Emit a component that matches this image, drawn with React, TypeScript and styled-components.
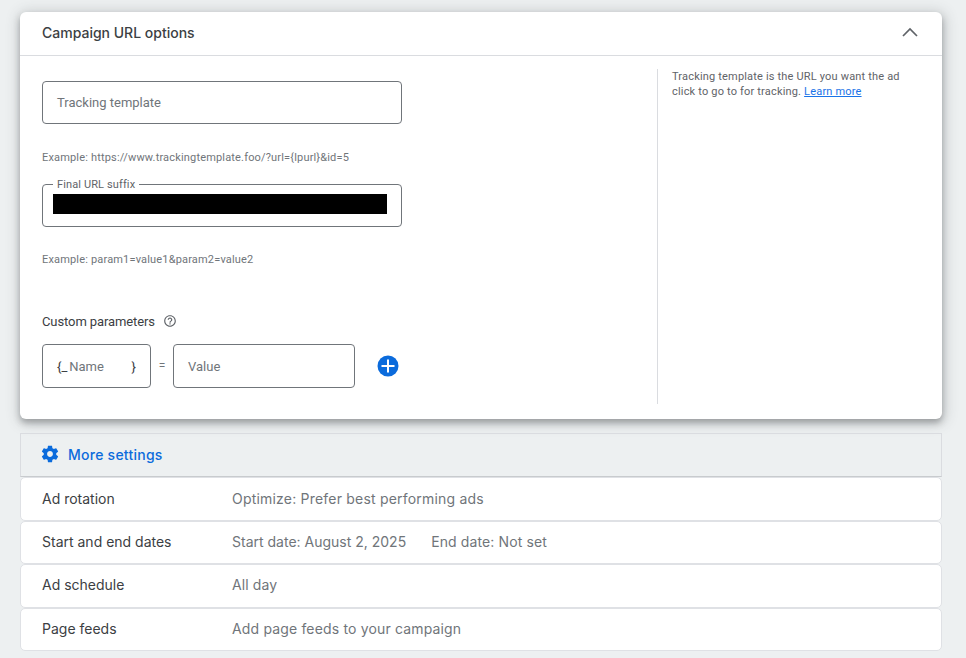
import React from "react";
import styled, { createGlobalStyle } from "styled-components";

const GlobalStyle = createGlobalStyle`
  html, body {
    margin: 0;
    padding: 0;
    background-color: #edf0f1;
    font-family: Roboto, "Liberation Sans", sans-serif;
  }
`;

const Page = styled.div`
  width: 966px;
  height: 658px;
  box-sizing: border-box;
  padding: 12px 24px 0 20px;
  overflow: hidden;
`;

const Card = styled.section`
  height: 407px;
  box-sizing: border-box;
  background-color: #fff;
  border-radius: 6px;
  box-shadow: 0 4px 6px rgba(60, 64, 67, 0.35), 1px 2px 14px 2px rgba(60, 64, 67, 0.22);
  margin-bottom: 14px;
`;

const CardHeader = styled.header`
  height: 44px;
  box-sizing: border-box;
  padding: 0 24px 3px 22px;
  display: flex;
  align-items: center;
  justify-content: space-between;
  border-bottom: 1px solid #dadce0;
`;

const CardTitle = styled.h2`
  margin: 0;
  font-family: Inter, Roboto, sans-serif;
  font-size: 14px;
  font-weight: 500;
  color: #3c4043;
`;

const Collapse = styled.svg`
  width: 24px;
  height: 24px;
  margin-right: -4px;
  display: block;
`;

const CardBody = styled.div`
  display: flex;
  height: 363px;
`;

const FormArea = styled.div`
  width: 637px;
  box-sizing: border-box;
  padding: 25px 0 0 22px;
`;

const HelpArea = styled.aside`
  margin-top: 13px;
  height: 335px;
  border-left: 1px solid #dadce0;
  padding: 0 30px 0 14px;
  flex: 1;
  font-size: 11px;
  line-height: 15px;
  letter-spacing: 0.18px;
  color: #5f6368;
`;

const HelpLink = styled.a`
  color: #1a73e8;
  text-decoration: underline;
`;

const Field = styled.div<{ $width: number; $height?: number }>`
  position: relative;
  width: ${({ $width }) => $width}px;
  height: ${({ $height }) => $height ?? 43}px;
  box-sizing: border-box;
  border: 1px solid #70757a;
  border-radius: 4px;
  padding: 0 14px;
  display: flex;
  align-items: center;
  font-size: 13px;
  color: #70757a;
`;

const FloatLabel = styled.span`
  position: absolute;
  top: -7px;
  left: 10px;
  padding: 0 4px;
  background-color: #fff;
  font-size: 11px;
  line-height: 13px;
  letter-spacing: 0.12px;
  color: #5f6368;
`;

const Redacted = styled.div`
  position: absolute;
  left: 10px;
  top: 9px;
  width: 334px;
  height: 20px;
  background-color: #000;
`;

const Hint = styled.p<{ $top: number; $bottom: number }>`
  margin: ${({ $top }) => $top}px 0 ${({ $bottom }) => $bottom}px;
  font-size: 11px;
  line-height: 14px;
  letter-spacing: 0.17px;
  color: #70757a;
`;

const ParamsLabel = styled.div`
  display: flex;
  align-items: center;
  gap: 8px;
  height: 16px;
  margin-bottom: 15px;
  font-size: 13px;
  letter-spacing: -0.1px;
  color: #3c4043;
`;

const ParamsRow = styled.div`
  display: flex;
  align-items: center;
`;

const Brace = styled.span`
  color: #3c4043;
`;

const NameText = styled.span`
  flex: 1;
  margin-left: 2px;
`;

const Equals = styled.span`
  width: 22px;
  text-align: center;
  font-size: 12px;
  color: #70757a;
`;

const AddButton = styled.svg`
  width: 22px;
  height: 22px;
  margin-left: 22px;
  display: block;
`;

const MoreSettings = styled.div`
  height: 44px;
  box-sizing: border-box;
  border: 1px solid #dadce0;
  border-bottom-color: #c8cbce;
  padding: 0 0 2px 19px;
  display: flex;
  align-items: center;
  gap: 8px;
  font-family: Inter, Roboto, sans-serif;
  font-size: 14px;
  font-weight: 450;
  letter-spacing: 0.25px;
  color: #0b6bdc;
`;

const SettingsList = styled.div`
  display: flex;
  flex-direction: column;
`;

const SettingRow = styled.div<{ $height: number; $lift: number }>`
  height: ${({ $height }) => $height}px;
  box-sizing: border-box;
  background-color: #fff;
  border: 1px solid #dfe1e5;
  border-radius: 5px;
  padding: 0 0 ${({ $lift }) => $lift}px 21px;
  display: flex;
  align-items: center;
  font-family: Inter, Roboto, sans-serif;
  font-size: 14px;
`;

const SettingName = styled.span`
  width: 190px;
  color: #3c4043;
`;

const SettingValue = styled.span<{ $spacing: number }>`
  color: #70757a;
  letter-spacing: ${({ $spacing }) => $spacing}px;
`;

const SettingExtra = styled.span`
  margin-left: 25px;
  letter-spacing: 0.12px;
`;

const rows = [
  { name: "Ad rotation", height: 44, lift: 2, spacing: 0.2, value: "Optimize: Prefer best performing ads" },
  { name: "Start and end dates", height: 43, lift: 2, spacing: 0, value: "Start date: August 2, 2025", extra: "End date: Not set" },
  { name: "Ad schedule", height: 44, lift: 4, spacing: 0.1, value: "All day" },
  { name: "Page feeds", height: 43, lift: 2, spacing: 0.16, value: "Add page feeds to your campaign" },
];

export default function App() {
  return (
    <Page>
      <GlobalStyle />
      <Card>
        <CardHeader>
          <CardTitle>Campaign URL options</CardTitle>
          <Collapse viewBox="0 0 24 24" fill="none" stroke="#5f6368" strokeWidth="1.7">
            <path d="M5 16l7-7 7 7" />
          </Collapse>
        </CardHeader>
        <CardBody>
          <FormArea>
            <Field $width={360}>Tracking template</Field>
            <Hint $top={27} $bottom={19}>Example: https://www.trackingtemplate.foo/?url={"{lpurl}"}&amp;id=5</Hint>
            <Field $width={360}>
              <FloatLabel>Final URL suffix</FloatLabel>
              <Redacted />
            </Field>
            <Hint $top={26} $bottom={46}>Example: param1=value1&amp;param2=value2</Hint>
            <ParamsLabel>
              Custom parameters
              <svg width="14" height="14" viewBox="0 0 24 24" fill="#5f6368">
                <path d="M11 18h2v-2h-2v2zm1-16C6.48 2 2 6.48 2 12s4.48 10 10 10 10-4.48 10-10S17.52 2 12 2zm0 18c-4.41 0-8-3.59-8-8s3.59-8 8-8 8 3.59 8 8-3.59 8-8 8zm0-14c-2.21 0-4 1.79-4 4h2c0-1.1.9-2 2-2s2 .9 2 2c0 2-3 1.75-3 5h2c0-2.25 3-2.5 3-5 0-2.21-1.79-4-4-4z" />
              </svg>
            </ParamsLabel>
            <ParamsRow>
              <Field $width={109} $height={44}>
                <Brace>{"{_"}</Brace>
                <NameText>Name</NameText>
                <Brace>{"}"}</Brace>
              </Field>
              <Equals>=</Equals>
              <Field $width={182} $height={44}>Value</Field>
              <AddButton viewBox="0 0 22 22">
                <circle cx="11" cy="11" r="10.5" fill="#0b6bdc" />
                <path d="M11 4.5v13M4.5 11h13" stroke="#fff" strokeWidth="2" />
              </AddButton>
            </ParamsRow>
          </FormArea>
          <HelpArea>
            Tracking template is the URL you want the ad click to go to for tracking.{" "}
            <HelpLink href="#">Learn more</HelpLink>
          </HelpArea>
        </CardBody>
      </Card>
      <MoreSettings>
        <svg width="20" height="20" viewBox="0 0 24 24" fill="#0b6bdc">
          <path d="M19.43 12.98c.04-.32.07-.64.07-.98s-.03-.66-.07-.98l2.11-1.65c.19-.15.24-.42.12-.64l-2-3.46c-.12-.22-.39-.3-.61-.22l-2.49 1c-.52-.4-1.08-.73-1.69-.98l-.38-2.65C14.46 2.18 14.25 2 14 2h-4c-.25 0-.46.18-.49.42l-.38 2.65c-.61.25-1.17.59-1.69.98l-2.49-1c-.23-.09-.49 0-.61.22l-2 3.46c-.13.22-.07.49.12.64l2.11 1.65c-.04.32-.07.65-.07.98s.03.66.07.98l-2.11 1.65c-.19.15-.24.42-.12.64l2 3.46c.12.22.39.3.61.22l2.49-1c.52.4 1.08.73 1.69.98l.38 2.65c.03.24.24.42.49.42h4c.25 0 .46-.18.49-.42l.38-2.65c.61-.25 1.17-.59 1.69-.98l2.49 1c.23.09.49 0 .61-.22l2-3.46c.12-.22.07-.49-.12-.64l-2.11-1.65zM12 15.5c-1.93 0-3.5-1.57-3.5-3.5s1.57-3.5 3.5-3.5 3.5 1.57 3.5 3.5-1.57 3.5-3.5 3.5z" />
        </svg>
        More settings
      </MoreSettings>
      <SettingsList>
        {rows.map((row) => (
          <SettingRow key={row.name} $height={row.height} $lift={row.lift}>
            <SettingName>{row.name}</SettingName>
            <SettingValue $spacing={row.spacing}>
              {row.value}
              {row.extra && <SettingExtra>{row.extra}</SettingExtra>}
            </SettingValue>
          </SettingRow>
        ))}
      </SettingsList>
    </Page>
  );
}
